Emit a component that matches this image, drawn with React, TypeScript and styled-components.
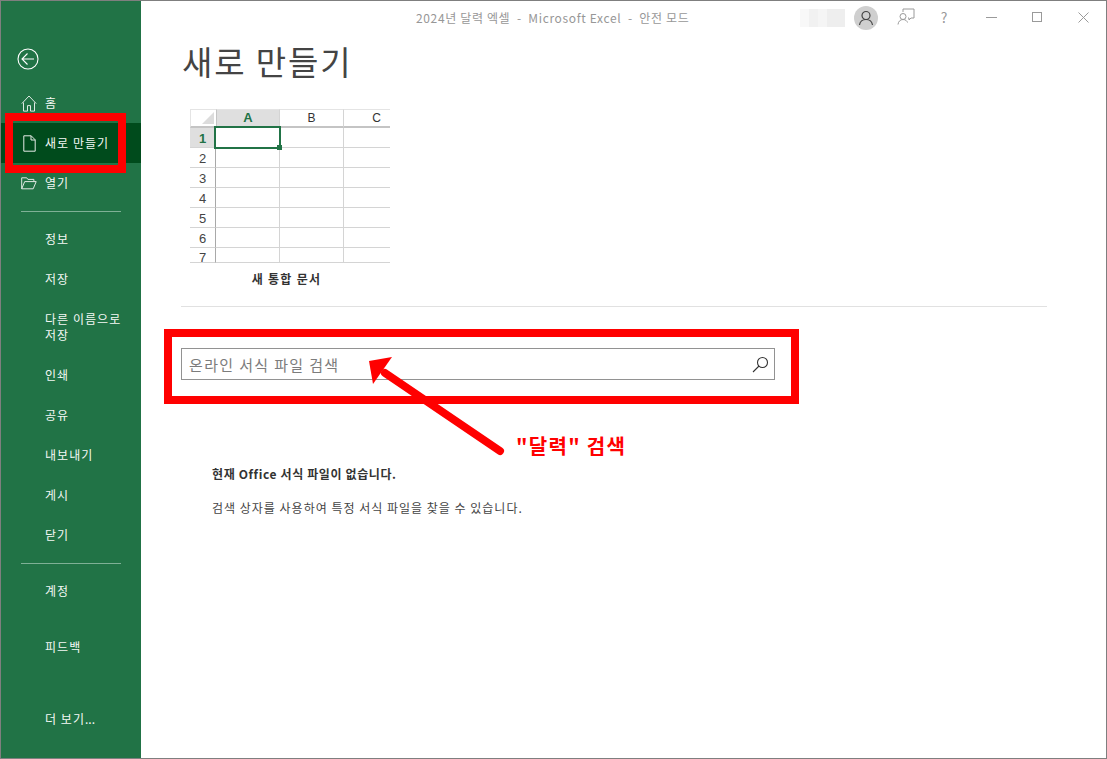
import React from 'react';
import styled, { createGlobalStyle } from 'styled-components';

const GlobalStyle = createGlobalStyle`
  html, body {
    margin: 0;
    padding: 0;
    background: #fff;
  }
  body {
    font-family: "Noto Sans CJK KR", "Liberation Sans", sans-serif;
  }
`;

const Frame = styled.div`
  position: relative;
  width: 1107px;
  height: 759px;
  box-sizing: border-box;
  border: 1px solid #7f7f7f;
  display: flex;
  overflow: hidden;
  background: #fff;
`;

const Sidebar = styled.nav`
  width: 140px;
  flex: none;
  background: #217346;
  color: #fff;
  display: flex;
  flex-direction: column;
  padding-top: 39px;
  box-sizing: border-box;
`;

const BackButton = styled.div`
  height: 38px;
  margin-bottom: 5px;
  padding-left: 15px;
  display: flex;
  align-items: center;
`;

const NavRow = styled.div<{ $selected?: boolean; $tall?: boolean }>`
  height: ${({ $tall }) => ($tall ? 56 : 40)}px;
  flex: none;
  display: flex;
  align-items: center;
  padding-left: ${({ $tall }) => ($tall ? 44 : 20)}px;
  background: ${({ $selected }) => ($selected ? '#004b1c' : 'transparent')};
  font-size: 12px;
  line-height: 16px;
  letter-spacing: 1.05px;
  color: #f4f8f5;
`;

const NavPlain = styled(NavRow)`
  padding-left: 44px;
`;

const Dots = styled.span`
  letter-spacing: 0;
`;

const NavIcon = styled.span<{ $inset?: number }>`
  width: ${({ $inset = 0 }) => 24 - $inset}px;
  padding-left: ${({ $inset = 0 }) => $inset}px;
  flex: none;
  display: flex;
  align-items: center;
`;

const NavDivider = styled.div`
  height: 1px;
  margin: 8px 20px 7px 20px;
  width: 100px;
  flex: none;
  background: #7fb096;
`;

const Spacer = styled.div<{ $h: number }>`
  height: ${({ $h }) => $h}px;
  flex: none;
`;

const Main = styled.main`
  flex: 1;
  min-width: 0;
  display: flex;
  flex-direction: column;
`;

const TitleBar = styled.header`
  height: 32px;
  flex: none;
  display: flex;
  align-items: center;
  position: relative;
`;

const WindowTitle = styled.div`
  position: absolute;
  left: 275px;
  top: 8px;
  font-size: 12px;
  line-height: 18px;
  letter-spacing: 0.64px;
  color: #979797;
  white-space: pre;
`;

const TitleTools = styled.div`
  margin-left: auto;
  display: flex;
  align-items: center;
  height: 32px;
`;

const BlurredName = styled.div`
  width: 45px;
  height: 18px;
  margin: 1px 9px 0 0;
  background: linear-gradient(90deg, #f8f8f8 0 9px, #f1f1f1 9px 18px, #f5f5f5 18px 27px, #eeeeee 27px);
`;

const Avatar = styled.div`
  width: 24px;
  height: 24px;
  margin: 1px 14px 0 0;
  border-radius: 50%;
  background: #cfcfcf;
  display: flex;
  align-items: center;
  justify-content: center;
`;

const ToolIcon = styled.div<{ $w: number }>`
  width: ${({ $w }) => $w}px;
  display: flex;
  justify-content: center;
  align-items: center;
  height: 24px;
  color: #9a9a9a;
  font-size: 14px;
`;

const Content = styled.div`
  flex: 1;
  padding: 0 59px 0 40px;
  display: flex;
  flex-direction: column;
`;

const PageTitle = styled.h1`
  margin: 5px 0 0 1px;
  height: 46px;
  font-size: 33px;
  line-height: 46px;
  font-weight: 400;
  letter-spacing: 1.9px;
  color: #444;
`;

const TemplateCard = styled.div`
  margin: 25px 0 0 9px;
  width: 200px;
  display: flex;
  flex-direction: column;
`;

const Sheet = styled.div`
  display: grid;
  grid-template-columns: 26px 64px 64px 46px;
  grid-template-rows: 19px repeat(6, 20px) 15px;
  height: 154px;
  overflow: hidden;
`;

const CornerCell = styled.div`
  background: #fff;
  border: solid #e4e4e4;
  border-width: 1px 0 2px 1px;
  border-bottom-color: #c4c4c4;
  box-sizing: border-box;
  position: relative;
  &::after {
    content: '';
    position: absolute;
    right: 2px;
    bottom: 2px;
    border-style: solid;
    border-width: 0 0 12px 12px;
    border-color: transparent transparent #dcdcdc transparent;
  }
`;

const ColHead = styled.div<{ $active?: boolean; $last?: boolean }>`
  box-sizing: border-box;
  background: ${({ $active }) => ($active ? '#dfdfdf' : '#fff')};
  border-top: 1px solid #e4e4e4;
  border-left: ${({ $active }) => ($active ? '1px solid #c4c4c4' : '0')};
  border-right: ${({ $last }) => ($last ? '0' : '1px solid #d4d4d4')};
  border-bottom: 2px solid ${({ $active }) => ($active ? '#a9a9a9' : '#c4c4c4')};
  color: ${({ $active }) => ($active ? '#217346' : '#333')};
  font-family: "Liberation Sans", sans-serif;
  font-size: ${({ $active }) => ($active ? 13 : 12)}px;
  font-weight: ${({ $active }) => ($active ? 700 : 400)};
  display: flex;
  align-items: center;
  justify-content: ${({ $last }) => ($last ? 'flex-end' : 'center')};
  padding-right: ${({ $last }) => ($last ? 9 : 0)}px;
  padding-bottom: 1px;
  line-height: 14px;
`;

const RowHead = styled.div<{ $active?: boolean; $clipped?: boolean }>`
  box-sizing: border-box;
  background: ${({ $active }) => ($active ? '#dfdfdf' : '#fff')};
  border-right: 1px solid #a9a9a9;
  border-bottom: 1px solid #d4d4d4;
  color: ${({ $active }) => ($active ? '#217346' : '#444')};
  font-family: "Liberation Sans", sans-serif;
  font-size: 13px;
  font-weight: ${({ $active }) => ($active ? 700 : 400)};
  display: flex;
  justify-content: center;
  align-items: center;
  overflow: hidden;
  padding-top: ${({ $clipped }) => ($clipped ? 5 : 2)}px;
`;

const Cell = styled.div<{ $selected?: boolean; $last?: boolean }>`
  box-sizing: border-box;
  border-right: ${({ $last }) => ($last ? '0' : '1px solid #d4d4d4')};
  border-bottom: 1px solid #d4d4d4;
  position: relative;
  ${({ $selected }) =>
    $selected &&
    `
    border: 2px solid #217346;
    margin: -2px -1px -1px -2px;
    z-index: 1;
    &::after {
      content: '';
      position: absolute;
      right: -3px;
      bottom: -3px;
      width: 5px;
      height: 5px;
      background: #217346;
    }
  `}
`;

const TemplateLabel = styled.div`
  margin: 7px 0 0 -7px;
  text-align: center;
  font-size: 12px;
  line-height: 18px;
  font-weight: 700;
  letter-spacing: 1.3px;
  color: #333;
`;

const Rule = styled.div`
  margin-top: 18px;
  height: 1px;
  background: #e1e1e1;
`;

const SearchBox = styled.div`
  margin-top: 41px;
  width: 594px;
  height: 32px;
  box-sizing: border-box;
  border: 1px solid #929292;
  display: flex;
  align-items: center;
  justify-content: space-between;
  padding: 0 5px 0 7px;
`;

const SearchText = styled.span`
  font-size: 15px;
  color: #7c7c7c;
  letter-spacing: 1.35px;
`;

const Messages = styled.div`
  margin: 85px 0 0 31px;
  font-size: 12px;
  line-height: 18px;
  letter-spacing: 1px;
  color: #444;
`;

const MessageTitle = styled.div`
  font-weight: 700;
  letter-spacing: 0.62px;
  color: #333;
  margin-bottom: 16px;
`;

// annotations drawn on top of the screenshot
const RedBox = styled.div<{ $x: number; $y: number; $w: number; $h: number }>`
  position: absolute;
  left: ${({ $x }) => $x}px;
  top: ${({ $y }) => $y}px;
  width: ${({ $w }) => $w}px;
  height: ${({ $h }) => $h}px;
  box-sizing: border-box;
  border: 8px solid #ff0000;
  pointer-events: none;
`;

const ArrowLayer = styled.svg`
  position: absolute;
  left: 360px;
  top: 350px;
`;

const Callout = styled.div`
  position: absolute;
  left: 515px;
  top: 431px;
  font-size: 20px;
  line-height: 28px;
  font-weight: 700;
  color: #ff0000;
  letter-spacing: 1.3px;
  white-space: nowrap;
`;

const BackIcon = () => (
  <svg width="24" height="24" viewBox="0 0 24 24" fill="none" stroke="#fff" strokeWidth="1.1">
    <circle cx="12" cy="12" r="10" />
    <path d="M6 12h12M11.500 6.500 6 12l5.500 5.500" />
  </svg>
);

const HomeIcon = () => (
  <svg width="16" height="17" viewBox="0 0 16 17" fill="none" stroke="#dfe9e3" strokeWidth="1">
    <path d="M.8 8.600 8 1l7.200 7.600M2.500 7.500v8.600h4v-5.500h3v5.500h4V7.500" />
  </svg>
);

const FileIcon = () => (
  <svg width="13" height="17" viewBox="0 0 13 17" fill="none" stroke="#e4ebe7" strokeWidth="1">
    <path d="M.8.800h7.400l4 4v11.400H.8zM8 .800v4.200h4.200" />
  </svg>
);

const FolderIcon = () => (
  <svg width="16" height="13" viewBox="0 0 16 13" fill="none" stroke="#dfe9e3" strokeWidth="1">
    <path d="M.7 11.800V.8h5l1.200 1.600h6v2.200M.7 11.800h11.500l3-7.200H3.700z" />
  </svg>
);

const UserIcon = () => (
  <svg width="16" height="16" viewBox="0 0 16 16" fill="none" stroke="#444" strokeWidth="1.2">
    <circle cx="8" cy="5.500" r="4" />
    <path d="M1.500 15c.5-3.500 3-5.500 6.500-5.500s6 2 6.500 5.500" />
  </svg>
);

const FeedbackIcon = () => (
  <svg width="18" height="18" viewBox="0 0 18 18" fill="none" stroke="#9a9a9a" strokeWidth="1">
    <path d="M6 4V1h11v9h-3l-2 2v-2h-1" />
    <circle cx="6" cy="8.500" r="3" />
    <path d="M1 16.500c.3-3 2.300-5 5-5s4 1.500 4.500 3" />
  </svg>
);

const MinimizeIcon = () => (
  <svg width="11" height="1" viewBox="0 0 11 1">
    <rect width="11" height="1" fill="#9a9a9a" />
  </svg>
);

const MaximizeIcon = () => (
  <svg width="10" height="10" viewBox="0 0 10 10" fill="none" stroke="#9a9a9a">
    <rect x=".5" y=".5" width="9" height="9" />
  </svg>
);

const CloseIcon = () => (
  <svg width="11" height="11" viewBox="0 0 11 11" fill="none" stroke="#9a9a9a">
    <path d="M.5.500l10 10M10.500.500l-10 10" />
  </svg>
);

const SearchIcon = () => (
  <svg width="17" height="17" viewBox="0 0 17 17" fill="none" stroke="#333" strokeWidth="1.1">
    <circle cx="10.500" cy="6.500" r="5" />
    <path d="M7 10 1 16" />
  </svg>
);

const columns = ['A', 'B', 'C'];
const rows = [1, 2, 3, 4, 5, 6, 7];
const lowerNav = ['정보', '저장'];
const afterSaveAs = ['인쇄', '공유', '내보내기', '게시', '닫기'];

export default function App() {
  return (
    <>
      <GlobalStyle />
      <Frame>
        <Sidebar>
          <BackButton>
            <BackIcon />
          </BackButton>
          <NavRow>
            <NavIcon><HomeIcon /></NavIcon>홈
          </NavRow>
          <NavRow $selected>
            <NavIcon $inset={2}><FileIcon /></NavIcon>새로 만들기
          </NavRow>
          <NavRow>
            <NavIcon><FolderIcon /></NavIcon>열기
          </NavRow>
          <NavDivider />
          {lowerNav.map((label) => (
            <NavPlain key={label}>{label}</NavPlain>
          ))}
          <NavRow $tall>다른 이름으로<br />저장</NavRow>
          {afterSaveAs.map((label) => (
            <NavPlain key={label}>{label}</NavPlain>
          ))}
          <NavDivider />
          <NavPlain>계정</NavPlain>
          <Spacer $h={16} />
          <NavPlain>피드백</NavPlain>
          <Spacer $h={32} />
          <NavPlain>더 보기<Dots>...</Dots></NavPlain>
        </Sidebar>
        <Main>
          <TitleBar>
            <WindowTitle>2024년 달력 엑셀  -  Microsoft Excel  -  안전 모드</WindowTitle>
            <TitleTools>
              <BlurredName />
              <Avatar><UserIcon /></Avatar>
              <ToolIcon $w={28}><FeedbackIcon /></ToolIcon>
              <ToolIcon $w={48}>?</ToolIcon>
              <ToolIcon $w={46}><MinimizeIcon /></ToolIcon>
              <ToolIcon $w={46}><MaximizeIcon /></ToolIcon>
              <ToolIcon $w={46}><CloseIcon /></ToolIcon>
            </TitleTools>
          </TitleBar>
          <Content>
            <PageTitle>새로 만들기</PageTitle>
            <TemplateCard>
              <Sheet>
                <CornerCell />
                {columns.map((c, i) => (
                  <ColHead key={c} $active={i === 0} $last={i === 2}>{c}</ColHead>
                ))}
                {rows.map((r) => (
                  <React.Fragment key={r}>
                    <RowHead $active={r === 1} $clipped={r === 7}>{r}</RowHead>
                    {columns.map((c, i) => (
                      <Cell key={c} $selected={r === 1 && i === 0} $last={i === 2} />
                    ))}
                  </React.Fragment>
                ))}
              </Sheet>
              <TemplateLabel>새 통합 문서</TemplateLabel>
            </TemplateCard>
            <Rule />
            <SearchBox>
              <SearchText>온라인 서식 파일 검색</SearchText>
              <SearchIcon />
            </SearchBox>
            <Messages>
              <MessageTitle>현재 Office 서식 파일이 없습니다.</MessageTitle>
              <div>검색 상자를 사용하여 특정 서식 파일을 찾을 수 있습니다.</div>
            </Messages>
          </Content>
        </Main>
        <RedBox $x={4} $y={112} $w={121} $h={60} />
        <RedBox $x={163} $y={328} $w={635} $h={75} />
        <ArrowLayer width="150" height="110" viewBox="0 0 150 110">
          <path d="M139 100 24 22" stroke="#ff0000" strokeWidth="8" strokeLinecap="round" />
          <path d="M8 10 31 6 12 33z" fill="#ff0000" />
        </ArrowLayer>
        <Callout>"달력" 검색</Callout>
      </Frame>
    </>
  );
}
